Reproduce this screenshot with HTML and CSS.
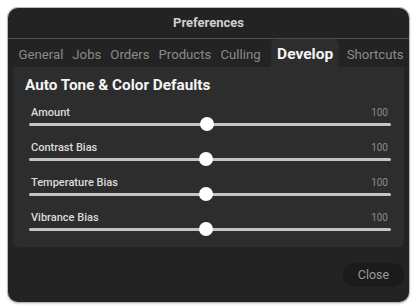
FILE: index.html
```html
<!DOCTYPE html>
<html lang="en">
<head>
<title>Preferences</title>
<link rel="stylesheet" href="styles.css">
</head>
<body>
<div class="dialog">
  <div class="titlebar">Preferences</div>
  <div class="tabs">
    <span class="tab">General</span>
    <span class="tab">Jobs</span>
    <span class="tab">Orders</span>
    <span class="tab">Products</span>
    <span class="tab">Culling</span>
    <span class="tab active">Develop</span>
    <span class="tab">Shortcuts</span>
  </div>
  <div class="panel">
    <h2>Auto Tone &amp; Color Defaults</h2>
    <div class="row">
      <div class="rowhead"><span>Amount</span><span class="val">100</span></div>
      <div class="track"><span class="thumb" style="left: 49.2%"></span></div>
    </div>
    <div class="row">
      <div class="rowhead"><span>Contrast Bias</span><span class="val">100</span></div>
      <div class="track"><span class="thumb" style="left: 49%"></span></div>
    </div>
    <div class="row">
      <div class="rowhead"><span>Temperature Bias</span><span class="val">100</span></div>
      <div class="track"><span class="thumb" style="left: 49%"></span></div>
    </div>
    <div class="row">
      <div class="rowhead"><span>Vibrance Bias</span><span class="val">100</span></div>
      <div class="track"><span class="thumb" style="left: 48.8%"></span></div>
    </div>
  </div>
  <div class="footer">
    <button class="close">Close</button>
  </div>
</div>
</body>
</html>
```

FILE: styles.css
```css
body {
  margin: 0;
  padding: 8px;
  background: #fff;
  font-family: Roboto, "Liberation Sans", sans-serif;
}
.dialog {
  width: 401px;
  height: 294px;
  background: #232323;
  border-radius: 10px;
  box-shadow: 0 0 0 1px #b8b8b8, 0 1px 3px rgba(0,0,0,0.3);
  display: flex;
  flex-direction: column;
}
.titlebar {
  height: 30px;
  line-height: 30px;
  text-align: center;
  font-size: 13px;
  font-weight: bold;
  color: #cfcfcf;
  border-bottom: 1px solid #4e4e4e;
}
.tabs {
  display: flex;
  height: 28px;
  padding: 0 6px;
  align-items: stretch;
}
.tab {
  display: flex;
  align-items: center;
  padding: 2px 4.5px 0;
  font-size: 13.2px;
  color: #8a8a8a;
}
.tab.active {
  background: #2d2d2d;
  color: #f4f4f4;
  font-weight: bold;
  font-size: 15.5px;
  padding: 2px 6px 0;
  margin: 0 3px 0 6px;
  border-radius: 6px 6px 0 0;
}
.panel {
  margin: 0 5px;
  height: 180px;
  background: #2d2d2d;
  border-radius: 0 0 6px 6px;
  padding: 0 13px 0 16px;
}
.panel h2 {
  margin: 0 0 0 -4px;
  padding: 9px 0 12px;
  font-size: 15.3px;
  color: #f4f4f4;
}
.row {
  margin-bottom: 15px;
}
.rowhead {
  display: flex;
  justify-content: space-between;
  font-size: 11px;
  font-weight: 500;
  color: #dcdcdc;
  padding: 0 3px 0 2px;
  line-height: 13px;
}
.val {
  font-size: 10px;
  font-weight: normal;
  color: #8c8c8c;
}
.track {
  position: relative;
  height: 3px;
  margin-top: 4px;
  background: #c4c4c4;
  border-radius: 2px;
}
.thumb {
  position: absolute;
  top: -6px;
  width: 14px;
  height: 14px;
  margin-left: -7px;
  border-radius: 50%;
  background: #fff;
}
.footer {
  flex: 1;
  display: flex;
  justify-content: flex-end;
  align-items: center;
  padding: 0 5px;
}
.close {
  width: 61px;
  height: 24px;
  border: none;
  border-radius: 12px;
  background: #1b1b1b;
  color: #9a9a9a;
  font-family: inherit;
  font-size: 12.5px;
}
```
